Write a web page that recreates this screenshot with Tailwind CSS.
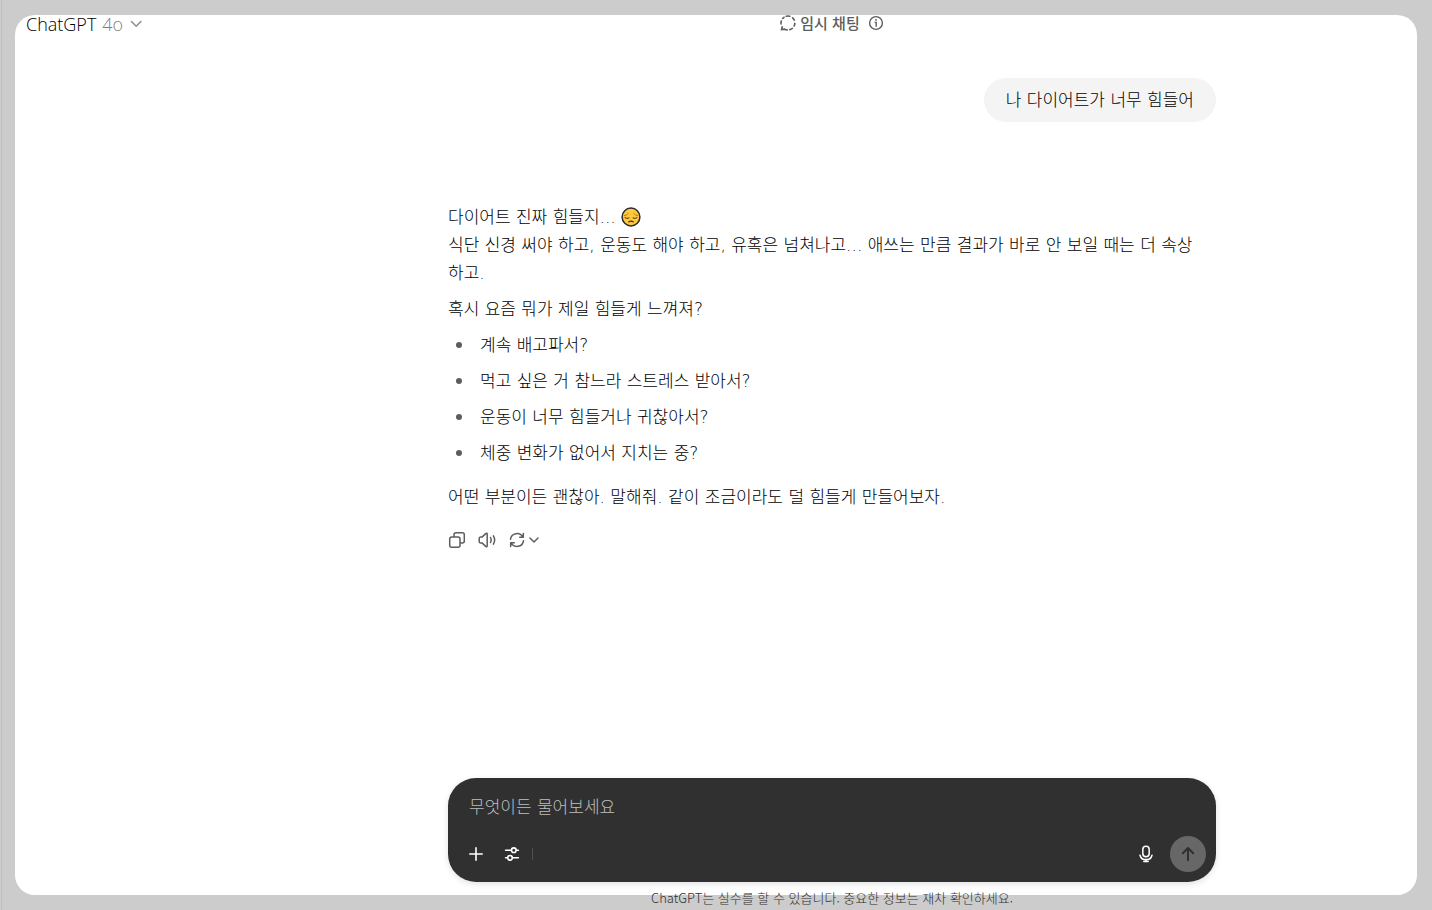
<!DOCTYPE html>
<html lang="ko">
<head>
    <meta charset="UTF-8">
    <meta name="viewport" content="width=device-width, initial-scale=1.0">
    <title>ChatGPT</title>
    <script src="https://cdn.jsdelivr.net/npm/@tailwindcss/browser@4"></script>
</head>
<body class="bg-[#cccccc] font-['Noto_Sans_CJK_KR',sans-serif] text-black">

    <div class="ml-px flex min-h-screen flex-col border-l border-[#bfbfbf] py-[15px] pr-[15px] pl-[13px]">
        <div class="flex flex-1 flex-col rounded-[20px] bg-white">

            <!-- Header -->
            <header class="flex h-5 items-start">
                <div class="w-[232px] shrink-0 pl-[11px]">
                    <button type="button" class="flex items-center gap-1.5 font-['Open_Sans',sans-serif] text-[18px] leading-[18px] font-light">
                        <span>ChatGPT</span>
                        <span class="text-[#7f7f7f]">4o</span>
                        <svg class="h-4 w-4 text-[#8f8f8f]" viewBox="0 0 16 16" fill="none" stroke="currentColor" stroke-width="1.5" stroke-linecap="round" stroke-linejoin="round"><path d="M2.5 5.5l4.7 4.7 4.7-4.7"/></svg>
                    </button>
                </div>
                <div class="flex flex-1 items-center justify-center text-[#5d5d5d]">
                    <svg class="mr-1 h-4 w-4" viewBox="0 0 16 16" fill="none" stroke="currentColor" stroke-width="1.6" stroke-linecap="round">
                        <path d="M6.2 1.3a7 7 0 0 1 3.6 0M12.6 2.8a7 7 0 0 1 1.7 2.3M14.8 8.4a7 7 0 0 1-.6 2.6M12.3 13.4a7 7 0 0 1-2.5 1.2M7.2 14.9a7 7 0 0 1-2.6-.7L1.6 14.6l.6-2.8M1.1 9a7 7 0 0 1 .2-3M2.7 3.5A7 7 0 0 1 4 2.3"/>
                    </svg>
                    <span class="text-[15px] leading-[14px] font-medium">임시 채팅</span>
                    <button type="button" aria-label="임시 채팅 정보" class="ml-2">
                        <svg class="h-4 w-4" viewBox="0 0 16 16" fill="none" stroke="currentColor" stroke-width="1.4" stroke-linecap="round"><circle cx="8" cy="8" r="6.4"/><path d="M7.2 7.4h1v3.8"/><circle cx="8" cy="4.9" r=".9" fill="currentColor" stroke="none"/></svg>
                    </button>
                </div>
            </header>

            <!-- Conversation -->
            <main class="flex flex-1 flex-col pt-[43px] pl-[232px] font-['DejaVu_Sans','Noto_Sans_CJK_KR',sans-serif] text-[17px] leading-7 font-light">
                <div class="mx-auto flex w-full max-w-3xl flex-1 flex-col">
                    <div class="self-end rounded-[22px] bg-[#f4f4f4] px-[22px] py-2">나 다이어트가 너무 힘들어</div>

                    <article class="mt-[81px]">
                        <p>
                            다이어트 진짜 힘들지...
                            <svg role="img" aria-label="슬픈 얼굴" class="inline h-5 w-5 align-[-4px]" viewBox="0 0 20 20" fill="none" stroke-linecap="round">
                                <circle cx="10" cy="10" r="8.9" fill="#ffc83d" stroke="#2b2a2c" stroke-width="1.5"/>
                                <path d="M3.4 8.6Q6 8.3 7.3 6.5M16.6 8.6Q14 8.3 12.7 6.5" stroke="#b5792a" stroke-width="1"/>
                                <path d="M4 10.3Q6 12.2 8 10.8M16 10.3Q14 12.2 12 10.8" stroke="#7a4a1c" stroke-width="1.1"/>
                                <path d="M7.8 14.8Q10 13.3 12.2 14.8" stroke="#4a2d12" stroke-width="1.3"/>
                            </svg>
                            <br>식단 신경 써야 하고, 운동도 해야 하고, 유혹은 넘쳐나고... 애쓰는 만큼 결과가 바로 안 보일 때는 더 속상<br>하고.
                        </p>
                        <p class="mt-2">혹시 요즘 뭐가 제일 힘들게 느껴져?</p>
                        <ul class="mt-2 space-y-2 pl-2">
                            <li class="flex items-center gap-[18px] before:size-1.5 before:rounded-full before:bg-[#5d5d5d] before:content-['']">계속 배고파서?</li>
                            <li class="flex items-center gap-[18px] before:size-1.5 before:rounded-full before:bg-[#5d5d5d] before:content-['']">먹고 싶은 거 참느라 스트레스 받아서?</li>
                            <li class="flex items-center gap-[18px] before:size-1.5 before:rounded-full before:bg-[#5d5d5d] before:content-['']">운동이 너무 힘들거나 귀찮아서?</li>
                            <li class="flex items-center gap-[18px] before:size-1.5 before:rounded-full before:bg-[#5d5d5d] before:content-['']">체중 변화가 없어서 지치는 중?</li>
                        </ul>
                        <p class="mt-4">어떤 부분이든 괜찮아. 말해줘. 같이 조금이라도 덜 힘들게 만들어보자.</p>
                    </article>

                    <div class="mt-5 flex items-center gap-3 text-[#5d5d5d]">
                        <button type="button" aria-label="복사">
                            <svg class="h-[18px] w-[18px]" viewBox="0 0 18 18" fill="none" stroke="currentColor" stroke-width="1.5" stroke-linejoin="round"><rect x="1.7" y="6" width="10.3" height="10.3" rx="2"/><path d="M6 6V3.7a2 2 0 0 1 2-2h6.3a2 2 0 0 1 2 2V10a2 2 0 0 1-2 2H12"/></svg>
                        </button>
                        <button type="button" aria-label="소리 내어 읽기">
                            <svg class="h-[18px] w-[18px]" viewBox="0 0 18 18" fill="none" stroke="currentColor" stroke-width="1.5" stroke-linecap="round" stroke-linejoin="round"><path d="M1.2 7.4a1.3 1.3 0 0 1 1.3-1.3h1.5L7.7 2.6Q9.2 1.6 9.2 3.2v11.6q0 1.6-1.5.6L4 11.9H2.5a1.3 1.3 0 0 1-1.3-1.3z"/><path d="M12.5 6.5q1.3 2.5 0 5M15.4 4.8q2.5 4.2 0 8.4"/></svg>
                        </button>
                        <button type="button" aria-label="다시 생성" class="flex items-center gap-0.5">
                            <svg class="h-[18px] w-[18px]" viewBox="0 0 18 18" fill="none" stroke="currentColor" stroke-width="1.5" stroke-linecap="round" stroke-linejoin="round"><path d="M2.5 8.2A6.6 6.6 0 0 1 14.8 6M15.3 2.6V6.2h-3.6M15.5 9.8A6.6 6.6 0 0 1 3.2 12M2.7 15.4V11.8h3.6"/></svg>
                            <svg class="h-3 w-3" viewBox="0 0 12 12" fill="none" stroke="currentColor" stroke-width="1.5" stroke-linecap="round" stroke-linejoin="round"><path d="M2 4l4 4 4-4"/></svg>
                        </button>
                    </div>

                    <!-- Composer -->
                    <form class="mt-auto mb-[13px] flex h-[104px] flex-col justify-between rounded-[28px] bg-[#303030] px-2.5 pt-[17px] pb-2.5 shadow-[0_2px_6px_rgba(0,0,0,0.12)]">
                        <input type="text" aria-label="메시지" placeholder="무엇이든 물어보세요" class="mx-[11px] h-6 bg-transparent leading-6 text-white outline-none placeholder:text-[#bfbfbf]">
                        <div class="flex items-center text-white">
                            <button type="button" aria-label="추가" class="flex h-9 w-9 items-center justify-center">
                                <svg class="h-4 w-4" viewBox="0 0 16 16" fill="none" stroke="currentColor" stroke-width="1.6" stroke-linecap="round"><path d="M8 1.8v12.4M1.8 8h12.4"/></svg>
                            </button>
                            <button type="button" aria-label="도구" class="flex h-9 w-9 items-center justify-center">
                                <svg class="h-4 w-4" viewBox="0 0 16 16" fill="none" stroke="currentColor" stroke-width="1.6" stroke-linecap="round"><path d="M1.6 4.2h5.6M12.4 4.2h2M1.6 11.8h1.8M8.6 11.8h5.8"/><circle cx="9.8" cy="4.2" r="2.3"/><circle cx="6" cy="11.8" r="2.3"/></svg>
                            </button>
                            <span class="ml-0.5 h-3 w-px bg-[#505050]"></span>
                            <button type="button" aria-label="받아쓰기" class="mr-1.5 ml-auto flex h-9 w-9 items-center justify-center">
                                <svg class="h-[18px] w-[18px]" viewBox="0 0 18 18" fill="none" stroke="currentColor" stroke-width="1.5" stroke-linecap="round"><rect x="5.8" y="1.3" width="6.4" height="10.4" rx="3.2"/><path d="M3 10.2a6.2 6.2 0 0 0 12 0M9 14.3v2.2M6.8 16.6h4.4"/></svg>
                            </button>
                            <button type="submit" aria-label="보내기" class="flex h-9 w-9 items-center justify-center rounded-full bg-[#676767] text-[#303030]">
                                <svg class="h-4 w-4" viewBox="0 0 16 16" fill="none" stroke="currentColor" stroke-width="2" stroke-linecap="round" stroke-linejoin="round"><path d="M8 14.3V2M2.8 7.2L8 2l5.2 5.2"/></svg>
                            </button>
                        </div>
                    </form>
                </div>
            </main>
        </div>

        <footer class="-mt-1 -mb-3 h-4 pl-[232px] text-center text-[13px] leading-[14px] font-light text-[#303030]">ChatGPT는 실수를 할 수 있습니다. 중요한 정보는 재차 확인하세요.</footer>
    </div>

</body>
</html>
